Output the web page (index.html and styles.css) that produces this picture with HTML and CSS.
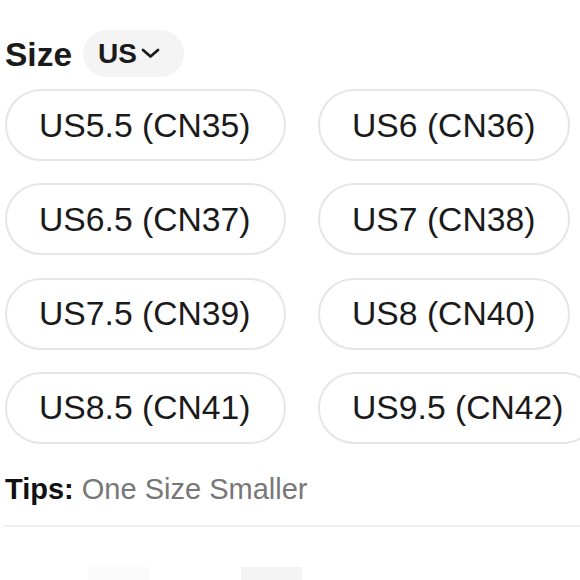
FILE: index.html
```html
<!DOCTYPE html>
<html lang="en">
<head>
<meta charset="utf-8">
<title>Size</title>
<link rel="stylesheet" href="styles.css">
</head>
<body>
<div class="page">
  <div class="header">
    <span class="title">Size</span>
    <button class="unit">US<svg class="chev" width="19" height="11" viewBox="0 0 19 11"><polyline points="2,2 9.5,8.5 17,2" fill="none" stroke="#1a1a1a" stroke-width="2.8" stroke-linecap="round" stroke-linejoin="round"/></svg></button>
  </div>
  <div class="sizes">
    <div class="pill">US5.5 (CN35)</div>
    <div class="pill">US6 (CN36)</div>
    <div class="pill">US6.5 (CN37)</div>
    <div class="pill">US7 (CN38)</div>
    <div class="pill">US7.5 (CN39)</div>
    <div class="pill">US8 (CN40)</div>
    <div class="pill">US8.5 (CN41)</div>
    <div class="pill">US9.5 (CN42)</div>
  </div>
  <p class="tips"><b>Tips:</b> One Size Smaller</p>
  <div class="divider"></div>
  <div class="thumbs">
    <div class="thumb thumb-a"></div>
    <div class="thumb thumb-b"></div>
  </div>
</div>
</body>
</html>
```

FILE: styles.css
```css
html, body {
  margin: 0;
  padding: 0;
  background: #fff;
  overflow: hidden;
}
body {
  font-family: "Liberation Sans", Arial, sans-serif;
  color: #1a1a1a;
}
.page {
  padding: 30px 0 0 5px;
  width: 575px;
}
.header {
  display: flex;
  align-items: center;
  gap: 11px;
  height: 47px;
}
.title {
  font-size: 33.5px;
  font-weight: bold;
  color: #1a1a1a;
  line-height: 1;
  position: relative;
  top: 1px;
}
.unit {
  display: flex;
  align-items: center;
  gap: 4px;
  height: 47px;
  padding: 0 24px 0 15px;
  border: none;
  border-radius: 24px;
  background: #f4f4f4;
  font-family: "Liberation Sans", Arial, sans-serif;
  font-size: 28px;
  font-weight: bold;
  color: #1a1a1a;
}
.chev {
  display: block;
}
.sizes {
  margin-top: 12px;
  display: grid;
  grid-template-columns: 280px auto;
  column-gap: 33px;
  row-gap: 22.3px;
  justify-items: start;
}
.pill {
  box-sizing: border-box;
  height: 72px;
  display: flex;
  align-items: center;
  justify-content: center;
  padding: 0 33px 0 32px;
  border: 2px solid #e6e6e6;
  border-radius: 36px;
  font-size: 33.7px;
  white-space: nowrap;
  color: #1a1a1a;
}
.tips {
  margin: 28px 0 0 0;
  font-size: 29px;
  line-height: 34px;
  color: #777;
}
.tips b {
  color: #111;
}
.divider {
  margin: 19px 0 0 -2px;
  height: 2px;
  background: #f0f0f0;
  width: 580px;
}
.thumbs {
  display: flex;
  gap: 92px;
  padding: 40px 0 0 83px;
}
.thumb {
  width: 61px;
  height: 13px;
}
.thumb-a {
  background: #fafafa;
}
.thumb-b {
  background: #f3f3f3;
}
```
